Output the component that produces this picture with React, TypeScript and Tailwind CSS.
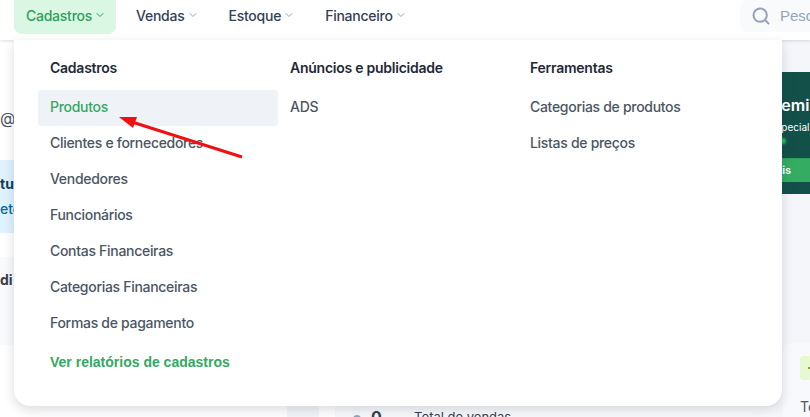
import { ChevronDown, Search } from "lucide-react";

const navItems = ["Vendas", "Estoque", "Financeiro"];

const columns = [
  {
    title: "Cadastros",
    links: [
      "Produtos",
      "Clientes e fornecedores",
      "Vendedores",
      "Funcionários",
      "Contas Financeiras",
      "Categorias Financeiras",
      "Formas de pagamento",
    ],
  },
  { title: "Anúncios e publicidade", links: ["ADS"] },
  { title: "Ferramentas", links: ["Categorias de produtos", "Listas de preços"] },
];

function Background() {
  return (
    <div className="flex h-[377px] overflow-hidden bg-white">
      <div className="flex w-[287px] shrink-0 flex-col">
        <p className="mt-[68px] h-[20px] text-[16px] leading-[20px] text-[#4b5563]">@</p>
        <div className="mt-[32px] h-[73px] bg-[#e0f2fe] pt-[14px] text-[14px] leading-[20px]">
          <p className="font-bold text-[#0f3d57]">tu</p>
          <p className="mt-[5px] font-medium text-[#0369a1]">eto</p>
        </div>
        <div className="mt-[24px] h-[88px] bg-[#f8fafc] pt-[13px] text-[14px] font-bold leading-[20px] text-[#374151]">
          di
        </div>
      </div>
      <div className="w-[32px] shrink-0 bg-[#f3f5f8]" />
      <div className="w-[457px] shrink-0 bg-white pl-[16px]">
        <div className="h-full bg-[#f8f9fc] pl-[18px] pt-[367px]">
          <div className="flex h-[20px] items-center text-[13px] leading-[20px] text-[#374151]">
            <span className="h-[8px] w-[8px] translate-y-[2px] rounded-full bg-[#94a3b8]" />
            <span className="ml-[10px] w-[43px] text-[16px] font-bold">0</span>
            <span>Total de vendas</span>
          </div>
        </div>
      </div>
      <div className="flex flex-1 flex-col bg-[#f5f6fa]">
        <div className="mt-[32px] h-[132px] bg-[#14504a] pt-[23px] text-white">
          <p className="-ml-[11px] whitespace-nowrap text-[16px] font-semibold leading-[20px]">Premium</p>
          <p className="-ml-[6px] mt-[4px] whitespace-nowrap text-[10px] leading-[16px]">Especial</p>
          <div className="ml-[4px] mt-[3px] h-[6px] w-[6px] rounded-full bg-[#22c55e] blur-[1px]" />
          <div className="mt-[14px] flex h-[24px] items-center border-t border-[#2f9e5c] bg-[#34ad62]">
            <span className="-ml-[31px] whitespace-nowrap text-[11px] font-semibold">Ver mais</span>
          </div>
        </div>
        <div className="ml-[7px] mt-[149px] flex-1 rounded-tl-[8px] bg-[#f8f9fc] pl-[17px] pt-[13px]">
          <div className="flex h-[24px] items-center rounded-l-[4px] bg-[#e8f8d0] pl-[8px]">
            <span className="h-[2px] w-[3px] bg-[#84a92f]" />
          </div>
          <p className="mt-[17px] text-[14px] leading-[20px] text-[#4b5563]">Total</p>
        </div>
      </div>
    </div>
  );
}

export default function App() {
  return (
    <div className="relative h-[417px] w-[810px] overflow-hidden bg-white font-['Inter',sans-serif]">
      <header className="relative z-10 flex h-[40px] items-start bg-white pl-[14px] shadow-[0_1px_3px_rgba(15,23,42,0.15)]">
        <button className="flex h-[34px] items-center gap-[2px] rounded-b-[8px] bg-[#d9f7e3] pb-[4px] pl-[12px] pr-[10px] text-[14px] font-medium tracking-[-0.25px] text-[#2f9e5c]">
          Cadastros
          <ChevronDown size={12} />
        </button>
        <nav className="flex">
          {navItems.map((item) => (
            <span
              key={item}
              className="flex h-[30px] items-center gap-[2px] pl-[20px] pr-[10px] text-[14px] font-medium tracking-[-0.25px] text-[#334155]"
            >
              {item}
              <ChevronDown size={12} className="text-[#94a3b8]" />
            </span>
          ))}
        </nav>
        <div className="ml-auto flex h-[32px] w-[70px] items-center gap-[9px] overflow-hidden rounded-l-[8px] bg-[#f8fafc] pl-[11px] font-['Liberation_Sans',sans-serif] text-[15px] text-[#94a3b8]">
          <Search size={20} strokeWidth={2.4} className="shrink-0" />
          <span>Pesquisar</span>
        </div>
      </header>

      <Background />

      <div className="absolute left-[14px] top-[40px] z-20 flex h-[366px] w-[768px] flex-col rounded-b-[16px] bg-white px-[24px] pt-[16px] shadow-[0_4px_12px_rgba(15,23,42,0.15)]">
        <div className="grid grid-cols-3">
          {columns.map((col) => (
            <div key={col.title} className="flex flex-col">
              <h3 className="pl-[12px] pt-[1px] text-[14px] font-semibold leading-[22px] tracking-[-0.25px] text-[#1f2937]">
                {col.title}
              </h3>
              <ul className="mt-[11px] flex flex-col">
                {col.links.map((link) => (
                  <li
                    key={link}
                    className={
                      link === "Produtos"
                        ? "flex h-[36px] items-center rounded-[4px] bg-[#eff3f7] pb-[3px] pl-[12px] text-[14px] font-medium tracking-[-0.3px] text-[#34a862]"
                        : "flex h-[36px] items-center pb-[3px] pl-[12px] text-[14px] font-medium tracking-[-0.3px] text-[#4b5563]"
                    }
                  >
                    {link}
                  </li>
                ))}
              </ul>
            </div>
          ))}
        </div>
        <a className="ml-[12px] mt-[9px] font-['Liberation_Sans',sans-serif] text-[14px] font-bold leading-[22px] text-[#34a862]">
          Ver relatórios de cadastros
        </a>
      </div>

      <svg className="absolute left-0 top-0 z-30" width="810" height="417" fill="none">
        <line x1="242" y1="157" x2="132" y2="122" stroke="#f01010" strokeWidth="3" />
        <polygon points="119,117 137,117 133,128" fill="#f01010" />
      </svg>
    </div>
  );
}
